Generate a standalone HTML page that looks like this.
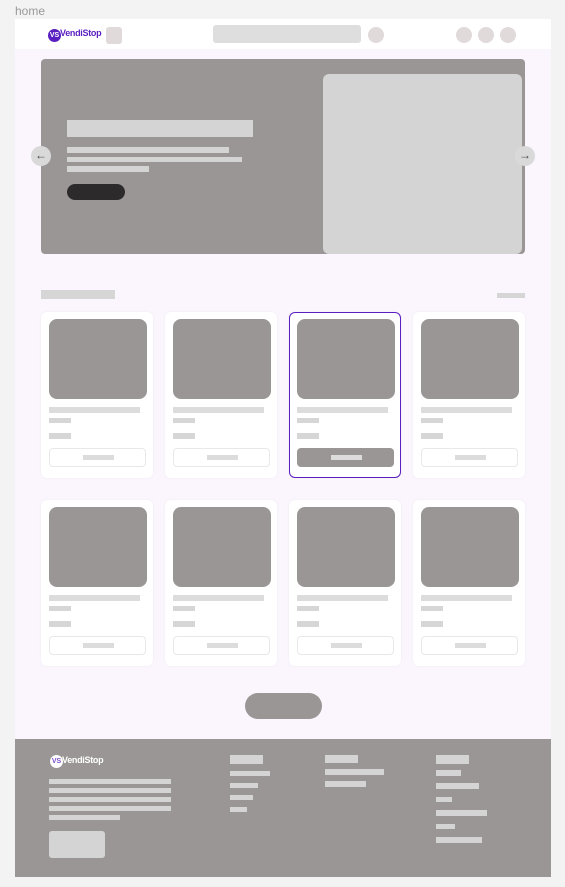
<!DOCTYPE html><html><head><meta charset="utf-8"><style>
*{margin:0;padding:0;box-sizing:border-box}
body{width:565px;height:887px;background:#f3f3f3;position:relative;font-family:"Liberation Sans",sans-serif;overflow:hidden}
div{position:absolute}
.g{background:#d4d4d4}
.card{width:112px;height:166px;background:#fff;border-radius:6px;box-shadow:0 0 3px rgba(0,0,0,.05)}
.card .im{left:8px;top:7px;width:98px;height:80px;background:#9a9695;border-radius:8px}
.card .l1{left:8px;top:95px;width:91px;height:6px;background:#dcdcdc}
.card .l2{left:8px;top:106px;width:22px;height:5px;background:#d6d6d6}
.card .l3{left:8px;top:121px;width:22px;height:6px;background:#d6d6d6}
.card .bt{left:8px;top:136px;width:97px;height:19px;border:1px solid #e8e8e8;border-radius:4px}
.card .bt i{position:absolute;left:33px;top:6px;width:31px;height:5px;background:#dcdcdc}
.sel{border:1px solid #5a1fc0}
.sel .bt{background:#9a9695;border-color:#9a9695}
.f{background:#d4d4d4}
</style></head><body>
<div style="left:15px;top:4px;font-size:12px;color:#999">home</div>
<div style="left:15px;top:19px;width:536px;height:858px;background:#fbf6fd"></div>
<div style="left:15px;top:19px;width:536px;height:30px;background:#fff"></div>
<div style="left:48px;top:29px;width:13px;height:13px;border-radius:50%;background:#5a1fc0;color:#fff;font-size:7px;font-weight:bold;line-height:13px;text-align:center">VS</div>
<div style="left:60px;top:28px;font-size:9px;font-weight:bold;color:#5a1fc0;letter-spacing:-.3px">VendiStop</div>
<div style="left:106px;top:27px;width:16px;height:17px;background:#e0dadb;border-radius:3px"></div>
<div style="left:213px;top:25px;width:148px;height:18px;background:#dedede;border-radius:3px"></div>
<div style="left:368px;top:27px;width:16px;height:16px;background:#e0dadb;border-radius:50%"></div>
<div style="left:456px;top:27px;width:16px;height:16px;background:#e0dadb;border-radius:50%"></div>
<div style="left:478px;top:27px;width:16px;height:16px;background:#e0dadb;border-radius:50%"></div>
<div style="left:500px;top:27px;width:16px;height:16px;background:#e0dadb;border-radius:50%"></div>

<div style="left:41px;top:59px;width:484px;height:195px;background:#9a9695;border-radius:4px"></div>
<div style="left:323px;top:74px;width:199px;height:180px;background:#d4d4d4;border-radius:6px"></div>
<div class="g" style="left:67px;top:120px;width:186px;height:17px"></div>
<div class="g" style="left:67px;top:147px;width:162px;height:6px"></div>
<div class="g" style="left:67px;top:157px;width:175px;height:5px"></div>
<div class="g" style="left:67px;top:166px;width:82px;height:6px"></div>
<div style="left:67px;top:184px;width:58px;height:16px;background:#2c2a2a;border-radius:8px"></div>
<div style="left:31px;top:146px;width:20px;height:20px;border-radius:50%;background:#d9d9d9;color:#444;font-size:12px;line-height:19px;text-align:center">←</div>
<div style="left:515px;top:146px;width:20px;height:20px;border-radius:50%;background:#d9d9d9;color:#444;font-size:12px;line-height:19px;text-align:center">→</div>

<div style="left:41px;top:290px;width:74px;height:9px;background:#d6d6d6"></div>
<div style="left:497px;top:293px;width:28px;height:5px;background:#d6d6d6"></div>

<div class="card" style="left:41px;top:312px"><div class="im"></div><div class="l1"></div><div class="l2"></div><div class="l3"></div><div class="bt"><i></i></div></div>
<div class="card" style="left:165px;top:312px"><div class="im"></div><div class="l1"></div><div class="l2"></div><div class="l3"></div><div class="bt"><i></i></div></div>
<div class="card sel" style="left:289px;top:312px"><div class="im" style="left:7px;top:6px"></div><div class="l1" style="left:7px;top:94px"></div><div class="l2" style="left:7px;top:105px"></div><div class="l3" style="left:7px;top:120px"></div><div class="bt" style="left:7px;top:135px"><i></i></div></div>
<div class="card" style="left:413px;top:312px"><div class="im"></div><div class="l1"></div><div class="l2"></div><div class="l3"></div><div class="bt"><i></i></div></div>
<div class="card" style="left:41px;top:500px"><div class="im"></div><div class="l1"></div><div class="l2"></div><div class="l3"></div><div class="bt"><i></i></div></div>
<div class="card" style="left:165px;top:500px"><div class="im"></div><div class="l1"></div><div class="l2"></div><div class="l3"></div><div class="bt"><i></i></div></div>
<div class="card" style="left:289px;top:500px"><div class="im"></div><div class="l1"></div><div class="l2"></div><div class="l3"></div><div class="bt"><i></i></div></div>
<div class="card" style="left:413px;top:500px"><div class="im"></div><div class="l1"></div><div class="l2"></div><div class="l3"></div><div class="bt"><i></i></div></div>

<div style="left:245px;top:693px;width:77px;height:26px;background:#9a9695;border-radius:13px"></div>

<div style="left:15px;top:739px;width:536px;height:138px;background:#9a9695"></div>
<div style="left:50px;top:755px;width:13px;height:13px;border-radius:50%;background:#fff;color:#7a4fd0;font-size:7px;font-weight:bold;line-height:13px;text-align:center">VS</div>
<div style="left:62px;top:755px;font-size:9px;font-weight:bold;color:#fff;letter-spacing:-.3px">VendiStop</div>
<div class="f" style="left:49px;top:779px;width:122px;height:5px"></div>
<div class="f" style="left:49px;top:788px;width:122px;height:5px"></div>
<div class="f" style="left:49px;top:797px;width:122px;height:5px"></div>
<div class="f" style="left:49px;top:806px;width:122px;height:5px"></div>
<div class="f" style="left:49px;top:815px;width:71px;height:5px"></div>
<div class="f" style="left:49px;top:831px;width:56px;height:27px;border-radius:3px"></div>

<div class="f" style="left:230px;top:755px;width:33px;height:9px"></div>
<div class="f" style="left:230px;top:771px;width:40px;height:5px"></div>
<div class="f" style="left:230px;top:783px;width:28px;height:5px"></div>
<div class="f" style="left:230px;top:795px;width:23px;height:5px"></div>
<div class="f" style="left:230px;top:807px;width:17px;height:5px"></div>

<div class="f" style="left:325px;top:755px;width:33px;height:8px"></div>
<div class="f" style="left:325px;top:769px;width:59px;height:6px"></div>
<div class="f" style="left:325px;top:781px;width:41px;height:6px"></div>

<div class="f" style="left:436px;top:755px;width:33px;height:9px"></div>
<div class="f" style="left:436px;top:770px;width:25px;height:6px"></div>
<div class="f" style="left:436px;top:783px;width:43px;height:6px"></div>
<div class="f" style="left:436px;top:797px;width:16px;height:5px"></div>
<div class="f" style="left:436px;top:810px;width:51px;height:6px"></div>
<div class="f" style="left:436px;top:824px;width:19px;height:5px"></div>
<div class="f" style="left:436px;top:837px;width:46px;height:6px"></div>
</body></html>
